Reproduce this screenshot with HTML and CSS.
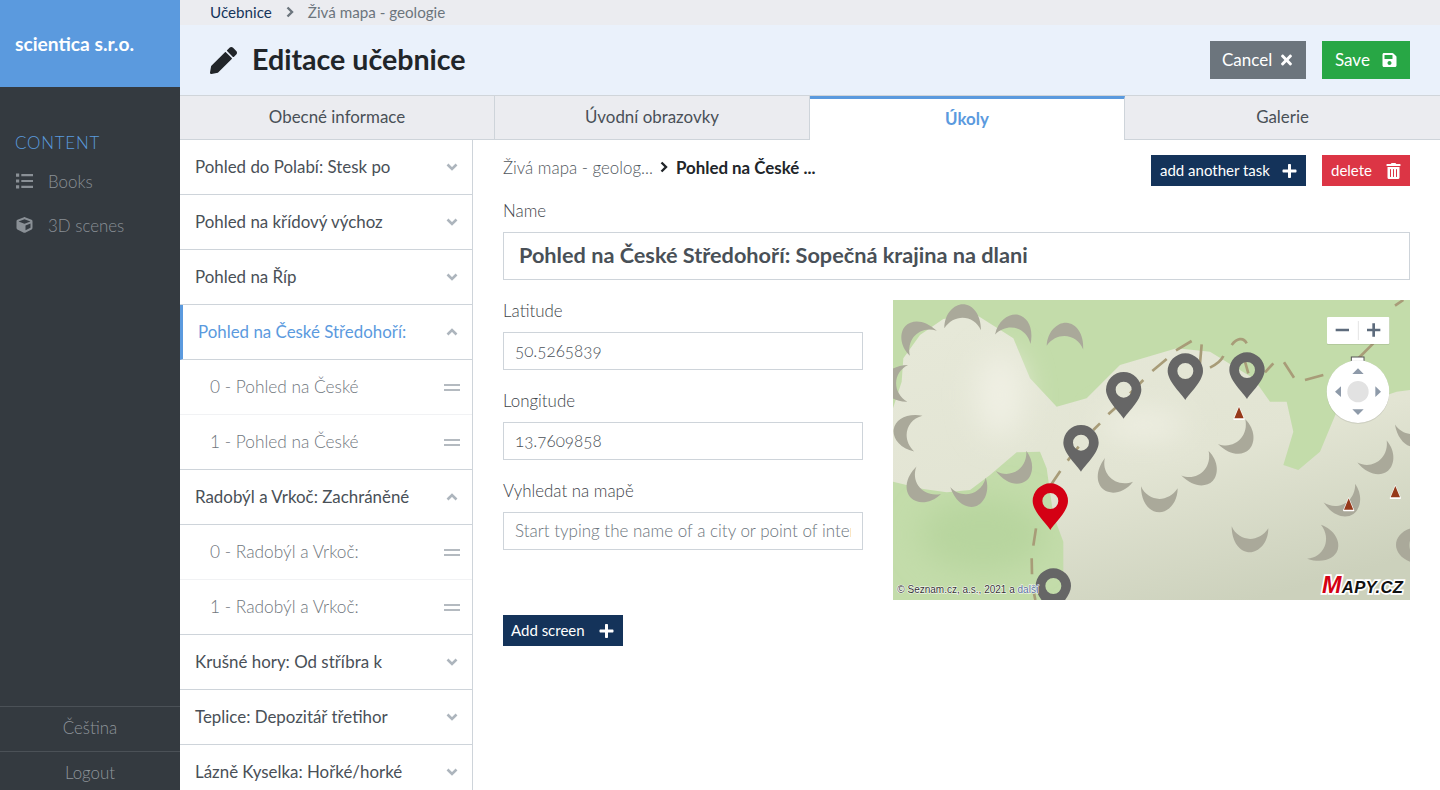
FILE: index.html
```html
<!DOCTYPE html>
<html lang="cs">

<head>
    <meta charset="utf-8" />
    <title>Editace učebnice</title>
    <link rel="stylesheet" href="styles.css">
</head>

<body>
    <svg class="sprites" width="0" height="0">
        <symbol id="i-pencil" viewBox="0 0 512 512"><path d="M497.9 142.1l-46.1 46.1c-4.7 4.7-12.3 4.7-17 0l-111-111c-4.7-4.7-4.7-12.3 0-17l46.1-46.1c18.7-18.7 49.1-18.7 67.9 0l60.1 60.1c18.8 18.7 18.8 49.1 0 67.9zM284.2 99.8L21.6 362.4.4 483.9c-2.9 16.4 11.4 30.6 27.8 27.8l121.5-21.3 262.6-262.6c4.7-4.7 4.7-12.3 0-17l-111-111c-4.8-4.7-12.4-4.7-17.1 0z"/></symbol>
        <symbol id="i-times" viewBox="0 0 352 512"><path d="M242.72 256l100.07-100.07c12.28-12.28 12.28-32.19 0-44.48l-22.24-22.24c-12.28-12.28-32.19-12.28-44.48 0L176 189.28 75.93 89.21c-12.28-12.28-32.19-12.28-44.48 0L9.21 111.45c-12.28 12.28-12.28 32.19 0 44.48L109.28 256 9.21 356.07c-12.28 12.28-12.28 32.19 0 44.48l22.24 22.24c12.28 12.28 32.2 12.28 44.48 0L176 322.72l100.07 100.07c12.28 12.28 32.2 12.28 44.48 0l22.24-22.24c12.28-12.28 12.28-32.19 0-44.48L242.72 256z"/></symbol>
        <symbol id="i-save" viewBox="0 0 448 512"><path d="M433.941 129.941l-83.882-83.882A48 48 0 0 0 316.118 32H48C21.49 32 0 53.49 0 80v352c0 26.51 21.49 48 48 48h352c26.51 0 48-21.49 48-48V163.882a48 48 0 0 0-14.059-33.941zM224 416c-35.346 0-64-28.654-64-64 0-35.346 28.654-64 64-64s64 28.654 64 64c0 35.346-28.654 64-64 64zm96-304.52V212c0 6.627-5.373 12-12 12H76c-6.627 0-12-5.373-12-12V108c0-6.627 5.373-12 12-12h228.52c3.183 0 6.235 1.264 8.485 3.515l3.48 3.48A11.996 11.996 0 0 1 320 111.48z"/></symbol>
        <symbol id="i-plus" viewBox="0 0 448 512"><path d="M416 208H272V64c0-17.67-14.33-32-32-32h-32c-17.67 0-32 14.33-32 32v144H32c-17.67 0-32 14.33-32 32v32c0 17.67 14.33 32 32 32h144v144c0 17.67 14.33 32 32 32h32c17.67 0 32-14.33 32-32V304h144c17.67 0 32-14.33 32-32v-32c0-17.67-14.33-32-32-32z"/></symbol>
        <symbol id="i-trash" viewBox="0 0 448 512"><path d="M32 464a48 48 0 0 0 48 48h288a48 48 0 0 0 48-48V128H32zm272-256a16 16 0 0 1 32 0v224a16 16 0 0 1-32 0zm-96 0a16 16 0 0 1 32 0v224a16 16 0 0 1-32 0zm-96 0a16 16 0 0 1 32 0v224a16 16 0 0 1-32 0zM432 32H312l-9.4-18.7A24 24 0 0 0 281.1 0H166.8a23.72 23.72 0 0 0-21.4 13.3L136 32H16A16 16 0 0 0 0 48v32a16 16 0 0 0 16 16h416a16 16 0 0 0 16-16V48a16 16 0 0 0-16-16z"/></symbol>
        <symbol id="i-cube" viewBox="0 0 512 512"><path d="M239.1 6.3l-208 78c-18.7 7-31.1 25-31.1 45v225.1c0 18.2 10.3 34.8 26.5 42.9l208 104c13.5 6.8 29.4 6.8 42.9 0l208-104c16.3-8.1 26.5-24.8 26.5-42.9V129.3c0-20-12.4-37.9-31.1-44.9l-208-78C262 2.2 250 2.2 239.1 6.3zM256 68.4l192 72v1.1l-192 78-192-78v-1.1l192-72zm32 356V275.5l160-65v133.9l-160 80z"/></symbol>
        <symbol id="i-list" viewBox="0 0 16 14"><path d="M0 0h3v3H0zM0 5.5h3v3H0zM0 11h3v3H0zM5 .5h11v2H5zM5 6h11v2H5zM5 11.500h11v2H5z"/></symbol>
        <symbol id="i-down" viewBox="0 0 12 8"><path d="M1.500 1.500 6 6l4.500-4.500" fill="none" stroke="currentColor" stroke-width="2.600"/></symbol>
        <symbol id="i-up" viewBox="0 0 12 8"><path d="M1.500 6.500 6 2l4.500 4.500" fill="none" stroke="currentColor" stroke-width="2.600"/></symbol>
        <symbol id="i-next" viewBox="0 0 8 12"><path d="M1.500 1.500 6 6l-4.500 4.500" fill="none" stroke="currentColor" stroke-width="2.400"/></symbol>
        <defs>
            <path id="crescent" d="M-55 0C-55-45-25-72 0-72 30-72 55-42 55 6 35-40-25-46-55 0Z"/>
            <path id="pin" fill-rule="evenodd" d="M0 0C-10-18-53-55-53-87A53 53 0 0 1 53-87C53-55 10-18 0 0ZM0-111A24 24 0 1 0 0-63 24 24 0 1 0 0-111Z"/>
            <g id="peak">
                <path d="M0-22 17 18Q17 21 14 21H-14Q-17 21-17 18Z" fill="#fff"/>
                <path d="M0-18 14 16H-14Z" fill="#96391a"/>
            </g>
        </defs>
    </svg>

    <div class="app">
        <aside class="sidebar">
            <div class="brand">scientica s.r.o.</div>
            <nav class="side-nav">
                <div class="side-title">CONTENT</div>
                <a class="side-link"><svg class="side-icon"><use href="#i-list"/></svg>Books</a>
                <a class="side-link"><svg class="side-icon"><use href="#i-cube"/></svg>3D scenes</a>
            </nav>
            <div class="side-foot">Čeština</div>
            <div class="side-foot">Logout</div>
        </aside>

        <main class="main">
            <div class="crumbs">
                <a class="crumb-link">Učebnice</a>
                <svg class="crumb-sep"><use href="#i-next"/></svg>
                <span>Živá mapa - geologie</span>
            </div>

            <header class="page-head">
                <svg class="head-icon"><use href="#i-pencil"/></svg>
                <h1>Editace učebnice</h1>
                <div class="head-btns">
                    <button class="btn btn-big btn-grey">Cancel <svg class="btn-icon"><use href="#i-times"/></svg></button>
                    <button class="btn btn-big btn-green">Save <svg class="btn-icon"><use href="#i-save"/></svg></button>
                </div>
            </header>

            <div class="tabs">
                <div class="tab">Obecné informace</div>
                <div class="tab">Úvodní obrazovky</div>
                <div class="tab active">Úkoly</div>
                <div class="tab">Galerie</div>
            </div>

            <div class="body">
                <ul class="tasks">
                    <li class="task">Pohled do Polabí: Stesk po <svg class="chev"><use href="#i-down"/></svg></li>
                    <li class="task">Pohled na křídový výchoz <svg class="chev"><use href="#i-down"/></svg></li>
                    <li class="task">Pohled na Říp <svg class="chev"><use href="#i-down"/></svg></li>
                    <li class="task current">Pohled na České Středohoří: <svg class="chev"><use href="#i-up"/></svg></li>
                    <li class="task sub">0 - Pohled na České <span class="drag"></span></li>
                    <li class="task sub last">1 - Pohled na České <span class="drag"></span></li>
                    <li class="task">Radobýl a Vrkoč: Zachráněné <svg class="chev"><use href="#i-up"/></svg></li>
                    <li class="task sub">0 - Radobýl a Vrkoč: <span class="drag"></span></li>
                    <li class="task sub last">1 - Radobýl a Vrkoč: <span class="drag"></span></li>
                    <li class="task">Krušné hory: Od stříbra k <svg class="chev"><use href="#i-down"/></svg></li>
                    <li class="task">Teplice: Depozitář třetihor <svg class="chev"><use href="#i-down"/></svg></li>
                    <li class="task">Lázně Kyselka: Hořké/horké <svg class="chev"><use href="#i-down"/></svg></li>
                </ul>

                <section class="editor">
                    <div class="editor-top">
                        <div class="path">
                            <span>Živá mapa - geolog...</span>
                            <svg class="path-sep"><use href="#i-next"/></svg>
                            <b>Pohled na České ...</b>
                        </div>
                        <div class="top-btns">
                            <button class="btn btn-navy btn-task">add another task <svg class="btn-icon"><use href="#i-plus"/></svg></button>
                            <button class="btn btn-red">delete <svg class="btn-icon"><use href="#i-trash"/></svg></button>
                        </div>
                    </div>

                    <label class="lbl">Name</label>
                    <input class="inp inp-name" type="text" value="Pohled na České Středohoří: Sopečná krajina na dlani" />

                    <div class="geo">
                        <div class="geo-form">
                            <label class="lbl">Latitude</label>
                            <input class="inp" type="text" value="50.5265839" />
                            <label class="lbl">Longitude</label>
                            <input class="inp" type="text" value="13.7609858" />
                            <label class="lbl">Vyhledat na mapě</label>
                            <input class="inp" type="text" placeholder="Start typing the name of a city or point of interest" />
                        </div>

                        <svg class="map" viewBox="9 15 1551 900">
                            <defs>
                                <linearGradient id="land" x1="0.2" y1="0" x2="0.7" y2="1">
                                    <stop offset="0" stop-color="#e6e8d8"/>
                                    <stop offset="0.55" stop-color="#e2e4d3"/>
                                    <stop offset="1" stop-color="#ccd1bc"/>
                                </linearGradient>
                                <filter id="soft" x="-100%" y="-100%" width="300%" height="300%"><feGaussianBlur stdDeviation="45"/></filter>
                                <filter id="edge"><feGaussianBlur stdDeviation="2"/></filter>
                            </defs>
                            <rect x="9" y="15" width="1551" height="900" fill="#c3dcaa"/>
                            <ellipse cx="280" cy="720" rx="190" ry="110" fill="#b8d59f" filter="url(#soft)"/>
                            <g filter="url(#edge)">
                                <path fill="url(#land)" d="M9 340 35 260 40 190 90 120 160 72 260 60 370 130 420 250 500 335 590 310 690 210 860 160 960 170 1090 250 1140 320 1190 320 1210 410 1180 510 1225 525 1290 470 1340 350 1430 320 1520 290 1560 285V915H520V740L490 660 470 520 450 470 380 472 300 540 240 585 170 592 100 582 9 560Z"/>
                            </g>
                            <ellipse cx="330" cy="300" rx="70" ry="130" fill="#f0f0e4" filter="url(#soft)"/>
                            <ellipse cx="760" cy="390" rx="130" ry="40" fill="#f0f0e4" filter="url(#soft)"/>

                            <g class="cres">
                                <use href="#crescent" transform="translate(218 100)"/>
                                <use href="#crescent" transform="translate(369 130) rotate(12)"/>
                                <use href="#crescent" transform="translate(525 155) rotate(3)"/>
                                <use href="#crescent" transform="translate(98 143) rotate(-46)"/>
                                <use href="#crescent" transform="translate(50 265) rotate(-92)"/>
                                <use href="#crescent" transform="translate(82 415) rotate(-80)"/>
                                <use href="#crescent" transform="translate(114 558) rotate(-135)"/>
                                <use href="#crescent" transform="translate(235 565) rotate(162)"/>
                                <use href="#crescent" transform="translate(365 500) rotate(143)"/>
                                <use href="#crescent" transform="translate(685 527) rotate(-143)"/>
                                <use href="#crescent" transform="translate(808 580) rotate(180)"/>
                                <use href="#crescent" transform="translate(917 507) rotate(135)"/>
                                <use href="#crescent" transform="translate(1027 412) rotate(135)"/>
                                <use href="#crescent" transform="translate(1448 472) rotate(140)"/>
                                <use href="#crescent" transform="translate(1350 597) rotate(146)"/>
                                <use href="#crescent" transform="translate(1080 700) rotate(180)"/>
                                <use href="#crescent" transform="translate(1275 741) rotate(109)"/>
                                <use href="#crescent" transform="translate(1570 385) rotate(170)"/>
                                <use href="#crescent" transform="translate(1590 750) rotate(-90)"/>
                            </g>

                            <path class="trail" d="M436 915 432 895M426 838 425 790M430 752 438 700M484 568 511 528M533 497 566 455M610 405 630 385M655 358 680 335M720 295 760 255M787 228 830 192M858 166 905 138M935 148 930 205M960 218C985 205 995 195 1000 183M1025 150C1040 130 1060 125 1070 145M1065 200 1075 235M1125 232 1150 205M1182 202 1212 248M1245 255 1300 240M1400 195 1450 145M1515 32 1540 15"/>

                            <use href="#peak" transform="translate(1047 354)"/>
                            <use href="#peak" transform="translate(1376 628)"/>
                            <use href="#peak" transform="translate(1516 591)"/>

                            <g class="pin-grey">
                                <use href="#pin" transform="translate(573 530)"/>
                                <use href="#pin" transform="translate(701 371)"/>
                                <use href="#pin" transform="translate(886 315)"/>
                                <use href="#pin" transform="translate(1071 312)"/>
                                <use href="#pin" transform="translate(490 960)"/>
                            </g>
                            <use class="pin-red" href="#pin" transform="translate(481 705)"/>

                            <rect x="1384" y="186" width="38" height="20" fill="#fff" stroke="#555" stroke-width="3"/>
                            <g class="ctl-shadow">
                                <rect class="ctl" x="1311" y="66" width="187" height="81" rx="3"/>
                                <circle class="ctl" cx="1404" cy="290" r="94"/>
                            </g>
                            <path class="ctl-line" d="M1405 78V135"/>
                            <path class="ctl-sign" d="M1337 105H1377M1431 105H1471M1451 85V125"/>
                            <circle cx="1404" cy="290" r="32" fill="#e2e2e2"/>
                            <path class="ctl-arrow" d="M1404 220 1421 237H1387ZM1404 360 1387 343H1421ZM1335 290 1353 274V306ZM1473 290 1456 274V306Z"/>

                            <text class="copy" x="22" y="893">© Seznam.cz, a.s., 2021 a <tspan class="copy-link">další</tspan></text>
                            <text class="logo" x="1296" y="893"><tspan class="logo-m">M</tspan>APY.CZ</text>
                        </svg>
                    </div>

                    <button class="btn btn-navy btn-add">Add screen <svg class="btn-icon"><use href="#i-plus"/></svg></button>
                </section>
            </div>
        </main>
    </div>
</body>

</html>
```

FILE: styles.css
```css
html, body {
    height: 100%;
    margin: 0;
    overflow: hidden;
}

body {
    font-family: Lato, "Open Sans", sans-serif;
    font-size: 16.9px;
    color: #495057;
    background-color: #fff;
}

.sprites {
    display: block;
    height: 0;
}

.app {
    display: flex;
    height: 796px;
}

/* sidebar */
.sidebar {
    display: flex;
    flex-direction: column;
    flex: 0 0 180px;
    background-color: #343a40;
}

.brand {
    height: 87px;
    padding: 32px 15px 0;
    box-sizing: border-box;
    font-size: 19.200px;
    font-weight: 700;
    color: #fff;
    background-color: #5b9ade;
}

.side-nav {
    flex: 1;
    padding-top: 44px;
}

.side-title {
    padding-left: 15px;
    line-height: 24px;
    color: #5b9ade;
    font-weight: 300;
    letter-spacing: 0.8px;
}

.side-link {
    display: flex;
    align-items: center;
    height: 44px;
    padding-left: 16px;
    color: #8a9096;
    font-weight: 300;
}

.side-link:first-of-type {
    margin-top: 4px;
}

.side-icon {
    width: 17px;
    height: 16px;
    margin-right: 15px;
    fill: #8a9096;
}

.side-foot {
    height: 44px;
    line-height: 42px;
    text-align: center;
    color: #8f959b;
    font-weight: 300;
    border-top: 1px solid #4b5157;
}

/* top of the page */
.main {
    flex: 1;
    display: flex;
    flex-direction: column;
    min-width: 0;
}

.crumbs {
    display: flex;
    align-items: center;
    height: 25px;
    padding: 0 0 2px 30px;
    box-sizing: border-box;
    font-size: 15.200px;
    color: #6c757d;
    background-color: #ebecf0;
}

.crumb-link {
    color: #15355b;
}

.crumb-sep {
    width: 8px;
    height: 12px;
    margin: 0 14px;
    color: #6c757d;
}

.page-head {
    display: flex;
    align-items: center;
    height: 70px;
    padding: 0 30px;
    background-color: #eaf1fb;
    border-bottom: 1px solid #d0d5da;
}

.head-icon {
    width: 27px;
    height: 27px;
    margin-right: 15px;
    fill: #212529;
}

h1 {
    margin: 0 0 2px;
    font-size: 28.600px;
    font-weight: 700;
    color: #212529;
}

.head-btns {
    display: flex;
    gap: 16px;
    margin-left: auto;
}

.btn {
    display: inline-flex;
    align-items: center;
    justify-content: space-between;
    box-sizing: border-box;
    height: 31px;
    padding: 0 9px 2px;
    border: 0;
    font-family: inherit;
    font-size: 15px;
    color: #fff;
}

.btn-icon {
    width: 15px;
    height: 16px;
    margin-top: 2px;
    fill: #fff;
}

.btn-big {
    height: 38px;
    padding: 0 12px 2px;
    font-size: 17px;
}

.btn-grey {
    width: 96px;
    background-color: #6c757d;
}

.btn-green {
    width: 88px;
    padding: 0 13px 2px;
    background-color: #28a745;
}

.btn-navy {
    background-color: #14335a;
}

.btn-task {
    width: 155px;
}

.btn-add {
    width: 120px;
    padding-left: 8px;
}

.btn-red {
    width: 88px;
    background-color: #dc3545;
}

/* tabs */
.tabs {
    display: flex;
    height: 44px;
}

.tab {
    box-sizing: border-box;
    width: 315px;
    line-height: 42px;
    text-align: center;
    background-color: #ebecf0;
    border-bottom: 1px solid #ced4da;
    border-right: 1px solid #ced4da;
}

.tab:last-child {
    border-right: 0;
}

.tab.active {
    line-height: 40px;
    font-weight: 700;
    color: #5b9ade;
    background-color: #fff;
    border-top: 3px solid #5b9ade;
    border-bottom: 0;
}

/* task list */
.body {
    flex: 1;
    display: flex;
    min-height: 0;
}

.tasks {
    flex: 0 0 293px;
    box-sizing: border-box;
    margin: 0;
    padding: 0;
    list-style: none;
    border-right: 1px solid #ced4da;
}

.task {
    display: flex;
    align-items: center;
    justify-content: space-between;
    box-sizing: border-box;
    height: 55px;
    padding: 0 14px 2px 15px;
    border-bottom: 1px solid #ced4da;
}

.task .chev,
.task .drag {
    margin-top: 2px;
}

.task.current {
    color: #5b9ade;
    border-left: 3px solid #5b9ade;
}

.task.sub {
    padding: 0 12px 2px 30px;
    font-size: 17.300px;
    color: #6f767d;
    font-weight: 300;
    border-bottom: 1px solid #f1f2f4;
}

.task.sub.last {
    border-bottom: 1px solid #ced4da;
}

.chev {
    width: 12px;
    height: 8px;
    color: #adb5bd;
}

.drag {
    width: 16px;
    height: 3px;
    border-top: 2px solid #b4bac0;
    border-bottom: 2px solid #b4bac0;
}

/* editor */
.editor {
    flex: 1;
    min-width: 0;
    padding: 15px 30px 0;
}

.editor-top {
    display: flex;
    justify-content: space-between;
    margin-bottom: 14px;
}

.path {
    display: flex;
    align-items: center;
    height: 24px;
    color: #51575d;
}

.path span {
    font-weight: 300;
}

.path b {
    color: #212529;
}

.path-sep {
    width: 8px;
    height: 12px;
    margin: 0 8px 0 7px;
    color: #212529;
}

.top-btns {
    display: flex;
    gap: 16px;
}

.lbl {
    display: block;
    margin-bottom: 8px;
    line-height: 22px;
    height: 24px;
    font-weight: 300;
    color: #3e444a;
}

.inp {
    display: block;
    box-sizing: border-box;
    width: 100%;
    height: 38px;
    margin-bottom: 20px;
    padding: 0 11px 2px;
    border: 1px solid #ced4da;
    border-radius: 0;
    font-family: inherit;
    font-size: 17px;
    font-weight: 300;
    font-variant-numeric: oldstyle-nums;
    color: #495057;
}

.inp::placeholder {
    color: #6c757d;
}

.inp-name {
    height: 48px;
    padding: 0 15px 2px;
    font-size: 21.700px;
    font-weight: 700;
}

.geo {
    display: flex;
    justify-content: space-between;
    margin-bottom: 15px;
}

.geo-form {
    flex: 0 0 360px;
}

.map {
    display: block;
    width: 517px;
    height: 300px;
}

.cres {
    fill: #aaa99a;
}

.trail {
    fill: none;
    stroke: #a89c78;
    stroke-width: 8;
}

.pin-grey {
    fill: #666;
}

.pin-red {
    fill: #d40014;
}

.ctl {
    fill: #fff;
}

.ctl-shadow {
    filter: drop-shadow(0 1px 2px rgba(0, 0, 0, 0.25));
}

.ctl-line {
    stroke: #e4e4e4;
    stroke-width: 3;
}

.ctl-sign {
    fill: none;
    stroke: #5d6b7c;
    stroke-width: 8;
}

.ctl-arrow {
    fill: #8e9aa9;
}

.copy {
    font-family: "Liberation Sans", Arial, sans-serif;
    font-size: 30px;
    fill: #333;
    paint-order: stroke;
    stroke: #fff;
    stroke-width: 3px;
}

.copy-link {
    fill: #5b6f9c;
}

.logo {
    font-family: "Liberation Sans", Arial, sans-serif;
    font-size: 50px;
    font-style: italic;
    font-weight: 700;
    letter-spacing: 1px;
    fill: #111;
    paint-order: stroke;
    stroke: #fff;
    stroke-width: 10px;
}

.logo-m {
    font-size: 70px;
    fill: #d40014;
}
```
